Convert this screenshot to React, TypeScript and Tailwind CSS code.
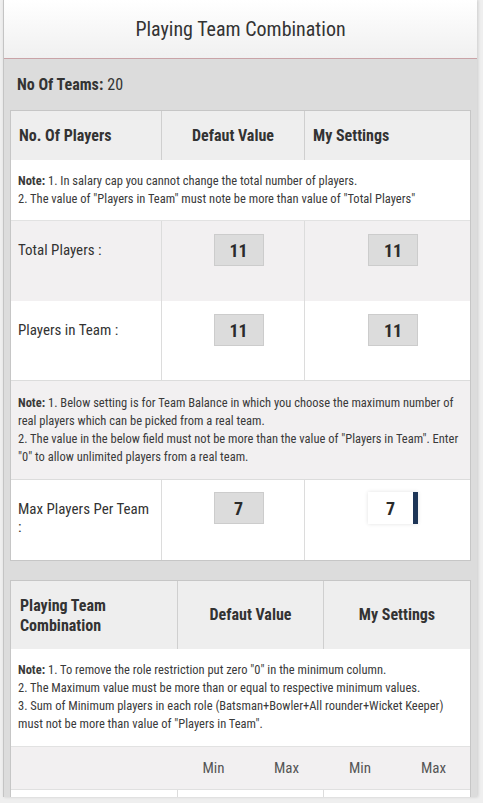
import React from 'react';

const Note = ({ children }: { children: React.ReactNode }) => (
  <div className="text-[12.5px] leading-[18px] text-[#3a3a3a]">{children}</div>
);

const ValueBox = ({ value }: { value: string }) => (
  <div className="flex h-[32px] w-[50px] items-center justify-center border border-[#cccccc] bg-[#dcdcdc] text-[18px] font-bold text-[#2b2b2b]">
    {value}
  </div>
);

export default function App() {
  return (
    <div className="h-[803px] w-full overflow-hidden bg-[#efefef] font-['Roboto_Condensed',Roboto,sans-serif] text-[#333]">
      <div className="ml-[3px] mr-[6px] h-[797px] overflow-hidden border-l border-[#c4c4c4] bg-[#dcdcdc] shadow-[1px_0_3px_rgba(0,0,0,0.15)]">
        {/* Header */}
        <div className="flex h-[59px] items-center justify-center border-b border-[#c9a3a7] bg-gradient-to-b from-white to-[#f0f0f0] text-[20px] text-[#333]">
          Playing Team Combination
        </div>

        <div className="pl-[6px] pr-[6px]">
          <div className="flex h-[51px] items-center pl-[7px] text-[16px]">
            <span className="font-bold">No Of Teams:</span>
            <span className="ml-1">20</span>
          </div>

          {/* Table 1 */}
          <div className="border border-[#c6c6c6] bg-white">
            <div className="grid h-[49px] grid-cols-[150px_143px_1fr] bg-[#eeeeee] text-[16px] font-bold">
              <div className="flex items-center pl-[8px]">No. Of Players</div>
              <div className="flex items-center justify-center border-l border-[#cfcfcf]">Defaut Value</div>
              <div className="flex items-center border-l border-[#cfcfcf] pl-[8px]">My Settings</div>
            </div>
            <div className="border-b border-[#e2e2e2] px-[7px] py-[12px]">
              <Note>
                <b>Note:</b> 1. In salary cap you cannot change the total number of players.
                <br />
                2. The value of "Players in Team" must note be more than value of "Total Players"
              </Note>
            </div>
            <div className="grid h-[80px] grid-cols-[150px_143px_1fr] bg-[#f2f0f1]">
              <div className="pl-[7px] pt-[13px] text-[15px] leading-[32px]">Total Players :</div>
              <div className="flex justify-center border-l border-[#dcdcdc] pl-[11px] pt-[13px]">
                <ValueBox value="11" />
              </div>
              <div className="flex justify-center border-l border-[#dcdcdc] pl-[11px] pt-[13px]">
                <ValueBox value="11" />
              </div>
            </div>
            <div className="grid h-[80px] grid-cols-[150px_143px_1fr] border-b border-[#dcdcdc] bg-white">
              <div className="pl-[7px] pt-[13px] text-[15px] leading-[32px]">Players in Team :</div>
              <div className="flex justify-center border-l border-[#dcdcdc] pl-[11px] pt-[13px]">
                <ValueBox value="11" />
              </div>
              <div className="flex justify-center border-l border-[#dcdcdc] pl-[11px] pt-[13px]">
                <ValueBox value="11" />
              </div>
            </div>
            <div className="bg-[#f2f0f1] px-[7px] pt-[13px] pb-[13px]">
              <Note>
                <b>Note:</b> 1. Below setting is for Team Balance in which you choose the maximum number of real players which can be picked from a real team.
                <br />
                2. The value in the below field must not be more than the value of "Players in Team". Enter "0" to allow unlimited players from a real team.
              </Note>
            </div>
            <div className="grid h-[81px] grid-cols-[150px_143px_1fr] border-t border-[#dcdcdc] bg-white">
              <div className="pl-[7px] pr-[10px] pt-[20px] text-[15px] leading-[18px]">Max Players Per Team :</div>
              <div className="flex justify-center border-l border-[#dcdcdc] pl-[11px] pt-[12px]">
                <ValueBox value="7" />
              </div>
              <div className="flex justify-center border-l border-[#dcdcdc] pl-[11px] pt-[12px]">
                <div className="flex h-[32px] w-[50px] items-center justify-center border-r-[5px] border-[#1d3557] bg-white text-[18px] font-bold text-[#2b2b2b] shadow-[0_0_4px_rgba(0,0,0,0.12)]">
                  7
                </div>
              </div>
            </div>
          </div>

          {/* Table 2 */}
          <div className="mt-[19px] border border-[#c6c6c6] bg-white">
            <div className="grid h-[68px] grid-cols-[166px_146px_1fr] bg-[#eeeeee] text-[16px] font-bold">
              <div className="pl-[9px] pt-[15px] leading-[20px]">
                Playing Team
                <br />
                Combination
              </div>
              <div className="flex items-center justify-center border-l border-[#cfcfcf]">Defaut Value</div>
              <div className="flex items-center justify-center border-l border-[#cfcfcf]">My Settings</div>
            </div>
            <div className="border-b border-[#e2e2e2] px-[7px] pt-[12px] pb-[13px]">
              <Note>
                <b>Note:</b> 1. To remove the role restriction put zero "0" in the minimum column.
                <br />
                2. The Maximum value must be more than or equal to respective minimum values.
                <br />
                3. Sum of Minimum players in each role (Batsman+Bowler+All rounder+Wicket Keeper) must not be more than value of "Players in Team".
              </Note>
            </div>
            <div className="grid h-[43px] grid-cols-[166px_73px_73px_74px_1fr] items-center border-b border-[#e0e0e0] bg-[#f2f0f1] text-[15px] text-[#555]">
              <div />
              <div className="text-center">Min</div>
              <div className="text-center">Max</div>
              <div className="text-center">Min</div>
              <div className="text-center">Max</div>
            </div>
            <div className="grid h-[60px] grid-cols-[166px_146px_1fr] bg-white">
              <div />
              <div className="border-l border-[#dcdcdc]" />
              <div className="border-l border-[#dcdcdc]" />
            </div>
          </div>
        </div>
      </div>
    </div>
  );
}
